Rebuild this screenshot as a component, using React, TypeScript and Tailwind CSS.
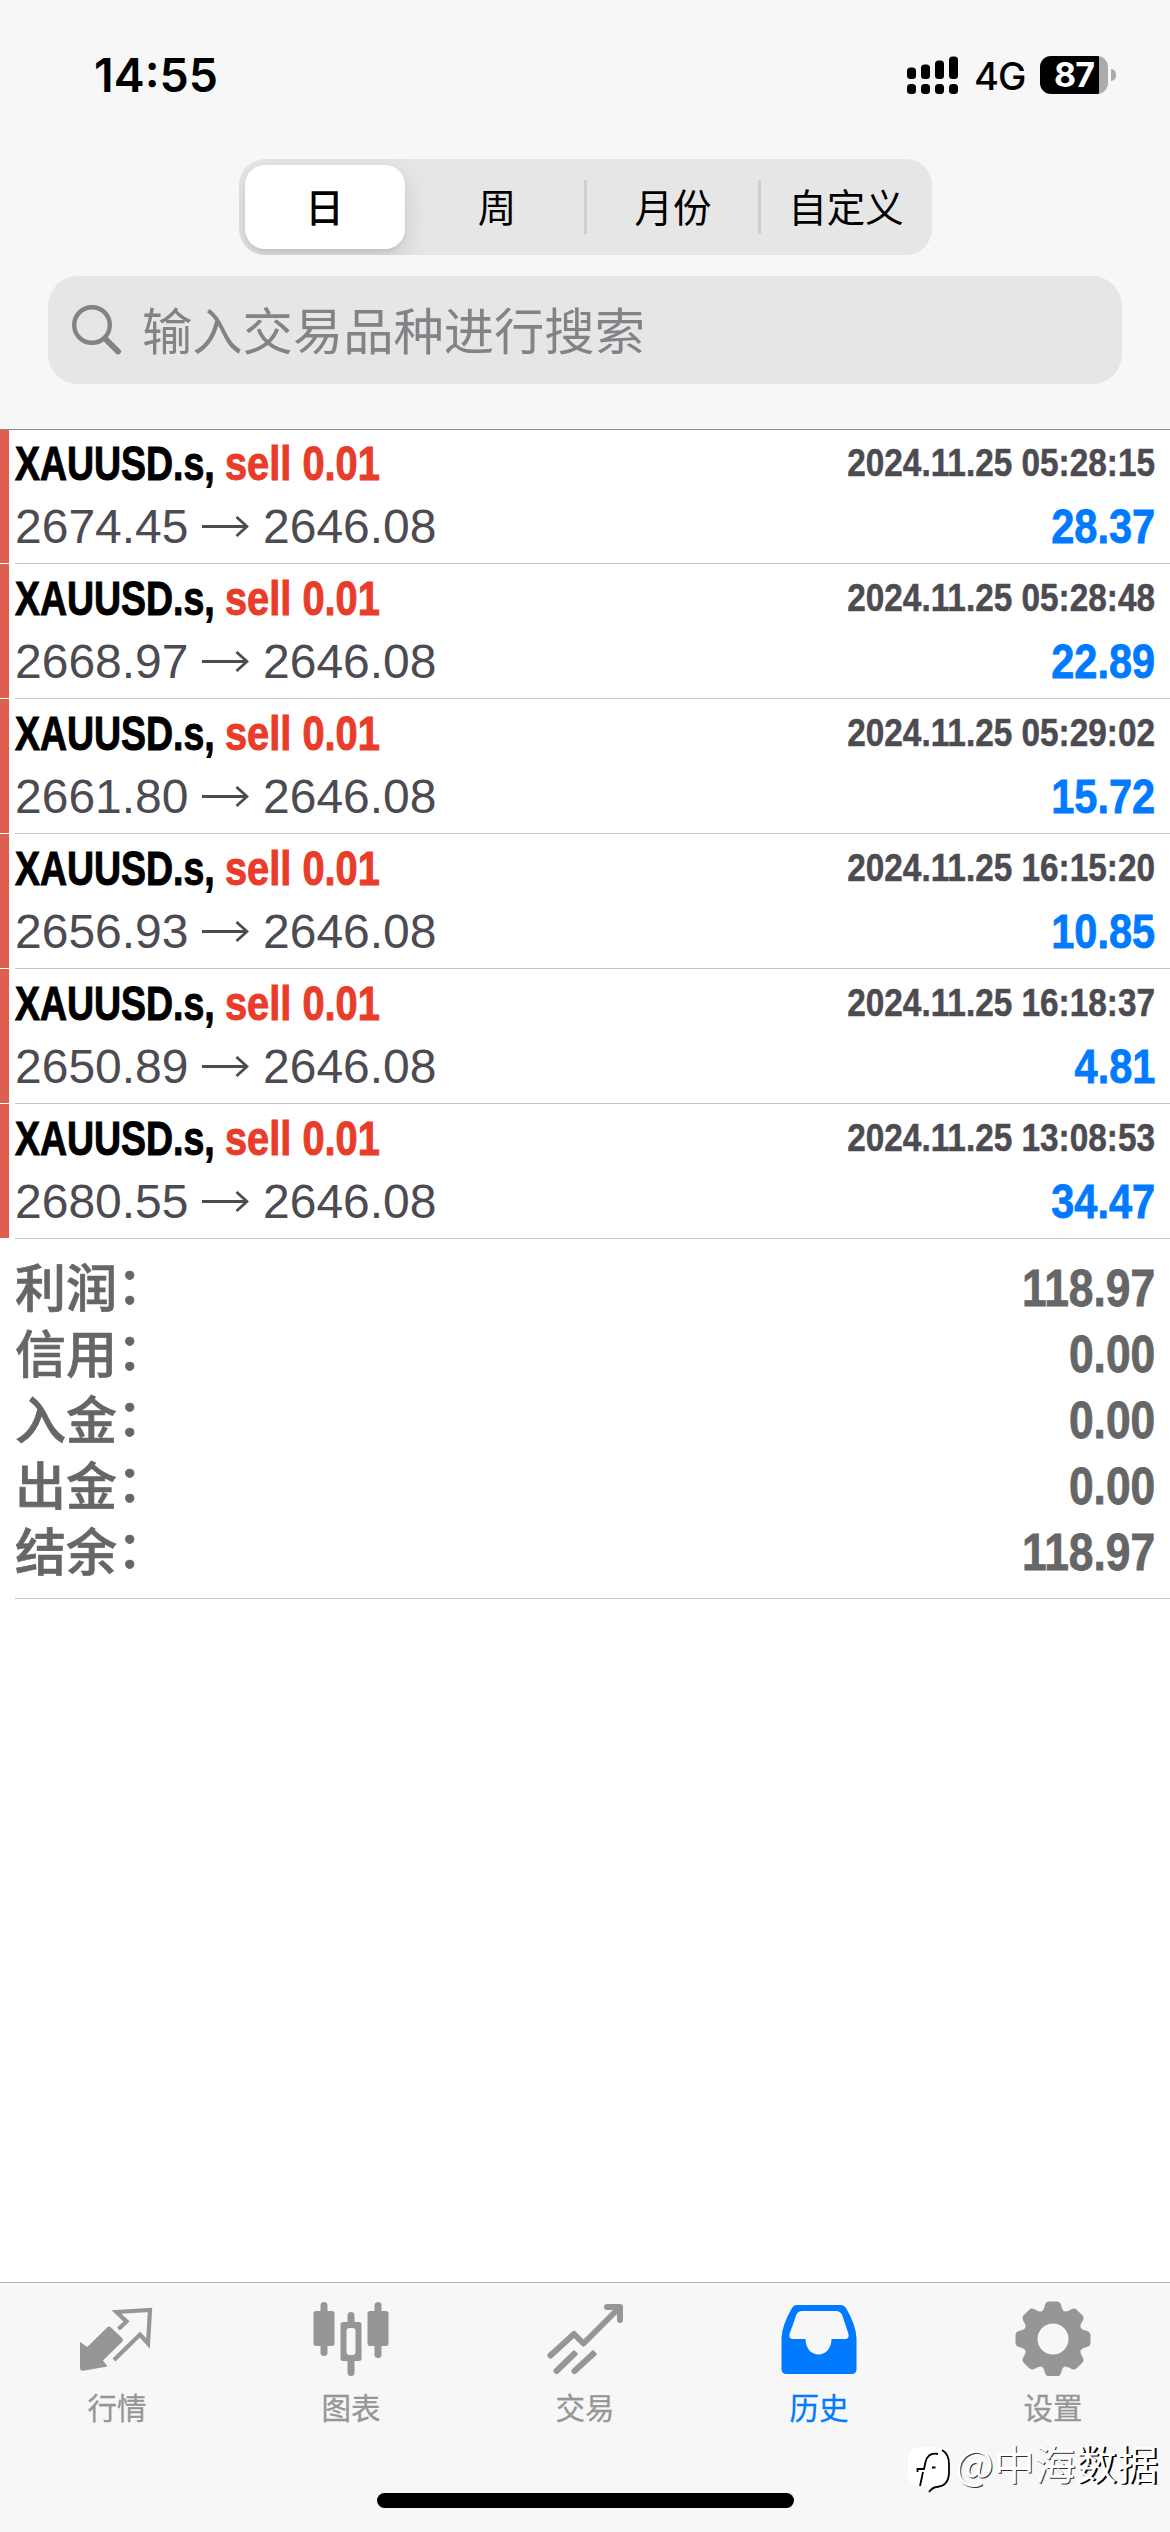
import React from 'react';

interface Deal {
  symbol: string;
  side: string;
  open: string;
  close: string;
  time: string;
  profit: string;
}

const DEALS: Deal[] = [
  { symbol: 'XAUUSD.s,', side: 'sell 0.01', open: '2674.45', close: '2646.08', time: '2024.11.25 05:28:15', profit: '28.37' },
  { symbol: 'XAUUSD.s,', side: 'sell 0.01', open: '2668.97', close: '2646.08', time: '2024.11.25 05:28:48', profit: '22.89' },
  { symbol: 'XAUUSD.s,', side: 'sell 0.01', open: '2661.80', close: '2646.08', time: '2024.11.25 05:29:02', profit: '15.72' },
  { symbol: 'XAUUSD.s,', side: 'sell 0.01', open: '2656.93', close: '2646.08', time: '2024.11.25 16:15:20', profit: '10.85' },
  { symbol: 'XAUUSD.s,', side: 'sell 0.01', open: '2650.89', close: '2646.08', time: '2024.11.25 16:18:37', profit: '4.81' },
  { symbol: 'XAUUSD.s,', side: 'sell 0.01', open: '2680.55', close: '2646.08', time: '2024.11.25 13:08:53', profit: '34.47' },
];

const SUMMARY = [
  { label: '利润', value: '118.97' },
  { label: '信用', value: '0.00' },
  { label: '入金', value: '0.00' },
  { label: '出金', value: '0.00' },
  { label: '结余', value: '118.97' },
];

const StatusBar: React.FC = () => (
  <div className="flex h-[159px] items-start justify-between pl-[94px] pr-[54px] pt-[53px]">
    <span className="font-['Inter','Liberation_Sans',sans-serif] text-[46.5px] font-semibold leading-[44px] text-black">14:55</span>
    <div className="flex h-[44px] items-center">
      <svg width="52" height="38" viewBox="0 0 52 38" fill="#000">
        <rect x="0" y="11.5" width="9" height="11.5" rx="3.5" />
        <rect x="14" y="8.5" width="9" height="14.5" rx="3.5" />
        <rect x="28" y="4.5" width="9" height="18.5" rx="3.5" />
        <rect x="42" y="0.5" width="9" height="22.5" rx="3.5" />
        <rect x="0" y="28" width="9" height="10" rx="3.5" />
        <rect x="14" y="28" width="9" height="10" rx="3.5" />
        <rect x="28" y="28" width="9" height="10" rx="3.5" />
        <rect x="42" y="28" width="9" height="10" rx="3.5" />
      </svg>
      <span className="ml-[15px] w-[66px] pt-[2px] font-['Inter','Liberation_Sans',sans-serif] text-[38px] font-medium leading-[40px] tracking-tight">4G</span>
      <div className="flex h-[38px] w-[68px] items-center justify-center rounded-[11px] bg-linear-to-r from-black from-87% to-[#ababab] to-87%">
        <span className="font-['Inter','Liberation_Sans',sans-serif] text-[34px] font-bold leading-none tracking-tight text-white">87</span>
      </div>
      <div className="ml-[3px] h-[12px] w-[5px] rounded-r-full bg-[#ababab]" />
    </div>
  </div>
);

const SegmentedControl: React.FC = () => (
  <div className="mx-auto flex h-[96px] w-[693px] items-center overflow-hidden rounded-[26px] bg-[#e6e6e6] pl-[6px] text-[38.5px] text-black">
    <div className="flex h-[84px] w-[160px] items-center justify-center rounded-[20px] bg-white pt-[3px] font-medium shadow-[0_9px_24px_rgba(0,0,0,0.14),0_3px_3px_rgba(0,0,0,0.05)]">日</div>
    <div className="w-[179px] pl-[6px] pt-[3px] text-center">周</div>
    <div className="h-[54px] w-[174px] border-l-[3px] border-[#cfcfd1] pl-[2px] pt-[2px] text-center leading-[54px]">月份</div>
    <div className="h-[54px] w-[174px] border-l-[3px] border-[#cfcfd1] pt-[2px] text-center leading-[54px]">自定义</div>
  </div>
);

const SearchField: React.FC = () => (
  <div className="mx-[48px] mt-[21px] flex h-[108px] items-center rounded-[30px] bg-[#e6e6e7] pl-[24px] text-[#828287]">
    <svg width="50" height="50" viewBox="0 0 50 50" fill="none" stroke="currentColor" strokeLinecap="round">
      <circle cx="20" cy="20" r="17.8" strokeWidth="4.4" />
      <path d="M33.5 34L46 46.5" strokeWidth="6" />
    </svg>
    <span className="ml-[20px] pt-[6px] text-[50.3px] leading-none">输入交易品种进行搜索</span>
  </div>
);

const DealRow: React.FC<{ deal: Deal }> = ({ deal }) => (
  <div className="flex h-[135px]">
    <div className="h-[134px] w-[9px] bg-[#df5e50]" />
    <div className="ml-[6px] flex flex-1 flex-col border-b border-[#c4c4c6] pr-[15px] pt-[9px]">
      <div className="flex h-[50px] items-center justify-between font-bold">
        <div className="flex text-[48.5px] leading-none [-webkit-text-stroke:1px_currentColor]">
          <span className="w-[210px] origin-left scale-x-[0.772] whitespace-nowrap text-black">{deal.symbol}</span>
          <span className="origin-left scale-x-[0.82] whitespace-nowrap text-[#e93c2a]">{deal.side}</span>
        </div>
        <span className="origin-right scale-x-[0.855] whitespace-nowrap pb-px text-[39px] leading-none text-[#4c4b51] [-webkit-text-stroke:0.5px_currentColor]">{deal.time}</span>
      </div>
      <div className="flex h-[75px] items-center justify-between pt-[3px]">
        <div className="flex items-center text-[48px] leading-none text-[#4c4b51]">
          <span className="w-[187px]">{deal.open}</span>
          <svg width="47" height="22" viewBox="0 0 47 22" fill="none" stroke="currentColor" strokeWidth="2.8">
            <path d="M0 10.5H45M34.5 1L45 10.5L34.5 20" />
          </svg>
          <span className="ml-[14px]">{deal.close}</span>
        </div>
        <span className="origin-right scale-x-[0.865] text-[48px] font-bold leading-none text-[#007aff] [-webkit-text-stroke:0.8px_currentColor]">{deal.profit}</span>
      </div>
    </div>
  </div>
);

const Summary: React.FC = () => (
  <div className="ml-[15px] h-[360px] border-b border-[#c4c4c6] pr-[15px] pt-[15px] text-[#666]">
    {SUMMARY.map(item => (
      <div key={item.label} className="flex h-[66px] items-center justify-between">
        <span className="pb-[4px] font-['Noto_Sans_CJK_SC',sans-serif] text-[51px] font-medium leading-none [-webkit-text-stroke:0.7px_currentColor]">
          {item.label}
          <span className="inline-block -translate-y-[3px]">：</span>
        </span>
        <span className="origin-right scale-x-[0.87] pt-[2px] text-[51px] font-bold leading-none [-webkit-text-stroke:0.8px_currentColor]">{item.value}</span>
      </div>
    ))}
  </div>
);

const QuotesIcon = () => (
  <svg width="76" height="76" viewBox="0 0 76 76">
    <path d="M1 42L8.300 47L28 27.500Q30 25.500 32 27.500L43 38Q45 40 43 42L24 60.500L28.500 66.500L4 70.700Q1 71 1 68Z" fill="currentColor" />
    <path d="M39.500 29L47.500 21.500L37.500 12L71 10L69 43.500L61 34.500L35 60" fill="none" stroke="currentColor" strokeWidth="4.200" />
  </svg>
);

const ChartIcon = () => (
  <svg width="76" height="76" viewBox="0 0 76 76" fill="currentColor">
    <rect x="7.500" y="2" width="7" height="54" rx="3.500" />
    <rect x="0.500" y="11" width="21" height="35" rx="2.500" />
    <rect x="61.500" y="2" width="7" height="56" rx="3.500" />
    <rect x="54.500" y="11" width="21" height="35" rx="2.500" />
    <path d="M34.500 22V15.500a3.500 3.500 0 0 1 7 0V22H46a2.500 2.500 0 0 1 2.500 2.500V58.500A2.500 2.500 0 0 1 46 61H41.500V72.500a3.500 3.500 0 0 1-7 0V61H30A2.500 2.500 0 0 1 27.500 58.500V24.500A2.500 2.500 0 0 1 30 22ZM36.500 28a3 3 0 0 0-3 3V52a3 3 0 0 0 3 3h3a3 3 0 0 0 3-3V31a3 3 0 0 0-3-3Z" fillRule="evenodd" />
  </svg>
);

const TradeIcon = () => (
  <svg width="76" height="76" viewBox="0 0 76 76" fill="none" stroke="currentColor" strokeWidth="6" strokeLinecap="round" strokeLinejoin="round">
    <path d="M3.500 55.500L27 34L36.500 43.500L72 8M60 7H73V20" />
    <path d="M9.500 71L27 54M27.500 71L46 54" />
    <path d="M26 55L29 52M45 55L48 52" strokeLinecap="butt" />
  </svg>
);

const HistoryIcon = () => (
  <svg width="76" height="76" viewBox="0 0 76 76" fill="currentColor">
    <path fillRule="evenodd" d="M15 5H60Q63 5 65 8Q75 25 75.500 38V69Q75.500 74 70.500 74H5.500Q.5 74 .5 69V38Q1 25 11 8Q13 5 15 5ZM21 11Q17 11 15.500 14.500L8.500 34Q7.500 39 12 39H24.500C24.500 48 30 54.500 37.500 54.500S50.500 48 50.500 39H64Q68.500 39 67.500 34L61 14.500Q59 11 55 11Z" />
  </svg>
);

const SettingsIcon = () => (
  <svg width="76" height="76" viewBox="0 0 76 76" fill="currentColor">
    <g>
      {[0, 45, 90, 135, 180, 225, 270, 315].map(a => (
        <path key={a} transform={`rotate(${a} 38 39)`} d="M25 13Q29 10 29.500 6.500Q30.500 1.500 34 1.500H42Q45.500 1.500 46.500 6.500Q47 10 51 13Z" />
      ))}
    </g>
    <circle cx="38" cy="39" r="22" fill="none" stroke="currentColor" strokeWidth="13" />
  </svg>
);

const TABS = [
  { label: '行情', icon: <QuotesIcon /> },
  { label: '图表', icon: <ChartIcon /> },
  { label: '交易', icon: <TradeIcon /> },
  { label: '历史', icon: <HistoryIcon />, active: true },
  { label: '设置', icon: <SettingsIcon /> },
];

const TabBar: React.FC = () => (
  <div className="flex h-[250px] flex-col border-t border-[#b2b2b2] bg-[#f7f7f7]">
    <div className="flex h-[210px]">
      {TABS.map(tab => (
        <div key={tab.label} className={`flex w-[234px] flex-col items-center pt-[17px] ${tab.active ? 'text-[#007aff]' : 'text-[#969696]'}`}>
          {tab.icon}
          <span className="mt-[15px] text-[29.5px] leading-[36px] [-webkit-text-stroke:0.3px_currentColor]">{tab.label}</span>
        </div>
      ))}
    </div>
    <div className="mx-auto h-[15px] w-[417px] rounded-full bg-black" />
  </div>
);

const Watermark: React.FC = () => (
  <div className="absolute left-[907px] top-[2440px] flex items-start">
    <svg width="46" height="54" viewBox="0 0 46 54">
      <path d="M14 7H28Q41 7 41 20V34Q41 46 29 47Q26 47 22 52L20 46H14Q1 46 1 33V20Q1 7 14 7Z" fill="#fff" />
      <path d="M35 10Q42 14 42 24V34Q41 46 30 47Q26 47 22 52" fill="none" stroke="#000" strokeWidth="1.800" />
      <path d="M31 14Q21 12 18.500 22L17 29H10.500V32M16 32L13 46M25 27.500H28.500" fill="none" stroke="#000" strokeWidth="1.800" />
    </svg>
    <span className="ml-[2px] font-['Noto_Sans_CJK_SC',sans-serif] text-[41px] leading-[44px] text-white [text-shadow:1px_1px_0_#333]">
      @中海<span className="[text-shadow:2px_1px_0_#000]">数据</span>
    </span>
  </div>
);

export default function App() {
  return (
    <div className="relative flex h-[2532px] w-[1170px] flex-col overflow-hidden bg-white font-['Liberation_Sans','Noto_Sans_CJK_SC',sans-serif]">
      <header className="relative z-10 -mb-px h-[430px] border-b border-[#8e8e92] bg-[#f7f7f7]">
        <StatusBar />
        <SegmentedControl />
        <SearchField />
      </header>
      <main className="flex-1">
        {DEALS.map(deal => (
          <DealRow key={deal.time} deal={deal} />
        ))}
        <Summary />
      </main>
      <TabBar />
      <Watermark />
    </div>
  );
}
